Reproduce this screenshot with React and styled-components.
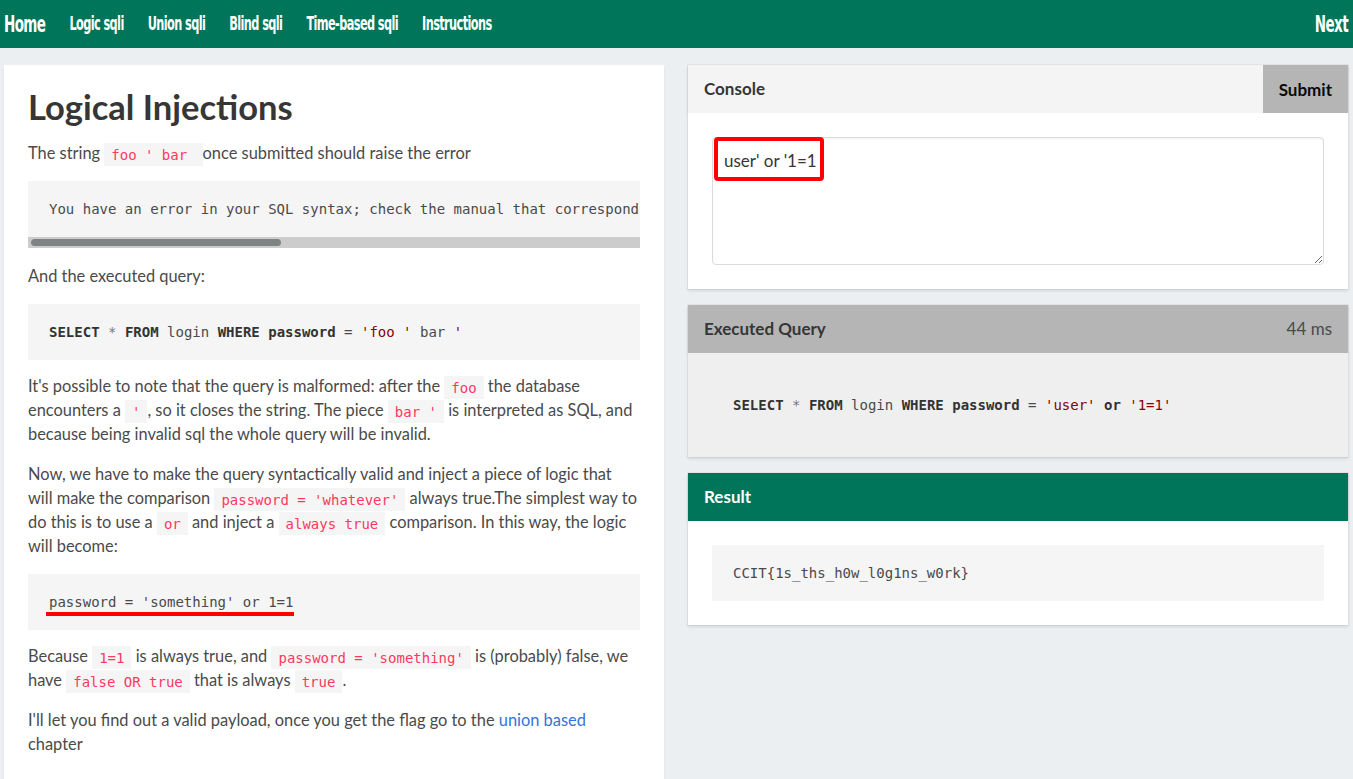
import React from 'react';
import styled, { createGlobalStyle } from 'styled-components';

// Base page styles, close to a Bulma default look
const GlobalStyle = createGlobalStyle`
  html, body {
    margin: 0;
    padding: 0;
    background: #eceff1;
    font-family: Lato, "Open Sans", sans-serif;
    font-size: 16.4px;
    line-height: 24px;
    color: #4a4a4a;
  }
  * { box-sizing: border-box; }
`;

const Navbar = styled.nav`
  display: flex;
  align-items: center;
  height: 48px;
  background: #00755a;
  padding: 0 5px 0 4px;
`;

const NavLink = styled.a`
  display: inline-block;
  color: #fff;
  font-family: "DejaVu Sans Condensed", "DejaVu Sans", sans-serif;
  font-stretch: condensed;
  font-weight: 700;
  font-size: ${({ $brand }) => ($brand ? '15px' : '12.6px')};
  letter-spacing: -0.6px;
  transform: scaleY(1.55);
  margin-right: ${({ $last }) => ($last ? '0' : '24px')};
  text-decoration: none;
  cursor: pointer;
`;

const NavSpacer = styled.div`
  flex: 1;
`;

const Main = styled.main`
  display: grid;
  grid-template-columns: minmax(0, 1fr) minmax(0, 1fr);
  align-items: start;
  gap: 24px;
  padding: 17px 5px 0 4px;
`;

const ArticleCard = styled.article`
  background: #fff;
  padding: 24px 24px 40px;
  box-shadow: 0 2px 3px rgba(10, 10, 10, 0.06);
`;

const Title = styled.h1`
  margin: 0 0 16px;
  font-size: 34.5px;
  line-height: 36px;
  font-weight: 700;
  color: #363636;
`;

const Para = styled.p`
  margin: 0 0 16px;
`;

const Code = styled.code`
  font-family: "DejaVu Sans Mono", monospace;
  font-size: 14px;
  line-height: 1;
  color: #ff3860;
  background: #f5f5f5;
  padding: 3.5px 7px;
`;

const Pre = styled.pre`
  margin: ${({ $flush }) => ($flush ? '0' : '0 0 14px')};
  padding: ${({ $pad }) => $pad || '17.5px 21px'};
  background: ${({ $bg }) => $bg || '#f5f5f5'};
  color: #4a4a4a;
  font-family: "DejaVu Sans Mono", monospace;
  font-size: 14px;
  line-height: 21px;
  white-space: pre;
  overflow: hidden;
`;

// Pre block that overflows sideways, with its horizontal scrollbar drawn in
const ScrollBox = styled.div`
  margin: 0 0 16px;
  background: #f5f5f5;
`;

const ScrollTrack = styled.div`
  height: 11px;
  background: #cccccc;
  padding: 2px 3px;
`;

const ScrollThumb = styled.div`
  width: 250px;
  height: 7px;
  border-radius: 4px;
  background: #7f8383;
`;

const Kw = styled.span`
  font-weight: 700;
  color: #333;
`;

const Str = styled.span`
  color: #880000;
`;

const Op = styled.span`
  color: #777;
`;

// Red hand-drawn underline from the annotated screenshot
const Marked = styled.span`
  position: relative;
  &::after {
    content: '';
    position: absolute;
    left: -3px;
    right: -1px;
    bottom: -6px;
    height: 4px;
    background: #ff0000;
  }
`;

const Link = styled.a`
  color: #3273dc;
  text-decoration: none;
`;

const Column = styled.section`
  display: flex;
  flex-direction: column;
  gap: 16px;
`;

const Card = styled.div`
  background: #fff;
  box-shadow: 0 2px 3px rgba(10, 10, 10, 0.1), 0 0 0 1px rgba(10, 10, 10, 0.04);
`;

const CardHeader = styled.header`
  display: flex;
  align-items: stretch;
  height: 48px;
  background: ${({ $bg }) => $bg};
  color: ${({ $color }) => $color || '#363636'};
  box-shadow: 0 1px 2px rgba(10, 10, 10, 0.1);
`;

const HeaderTitle = styled.p`
  flex: 1;
  margin: 0;
  display: flex;
  align-items: center;
  padding: 0 16px;
  font-size: 17px;
  font-weight: 700;
`;

const HeaderMeta = styled.span`
  display: flex;
  align-items: center;
  padding: 0 16px;
  font-size: 17px;
  color: #4a4a4a;
`;

const SubmitButton = styled.button`
  border: none;
  margin: 0;
  padding: 0 16px;
  background: #b5b5b5;
  color: #0a0a0a;
  font-family: inherit;
  font-size: 17px;
  font-weight: 700;
  cursor: pointer;
`;

const CardBody = styled.div`
  padding: ${({ $flush }) => ($flush ? '0' : '24px')};
  background: ${({ $bg }) => $bg || '#fff'};
`;

const InputWrap = styled.div`
  position: relative;
`;

const Textarea = styled.textarea`
  display: block;
  width: 100%;
  height: 128px;
  padding: 11px;
  border: 1px solid #dbdbdb;
  border-radius: 4px;
  font-family: Lato, "Open Sans", sans-serif;
  font-size: 17px;
  line-height: 24px;
  color: #363636;
  resize: vertical;
  outline: none;
  box-shadow: inset 0 1px 2px rgba(10, 10, 10, 0.05);
`;

const RedBox = styled.div`
  position: absolute;
  left: 2px;
  top: 0;
  width: 110px;
  height: 44px;
  border: 4px solid #ff0000;
  border-radius: 4px;
  pointer-events: none;
`;

const errorText =
  "You have an error in your SQL syntax; check the manual that corresponds to your MySQL server version for the right syntax to use near 'bar '' at line 1";

export default function App() {
  return (
    <>
      <GlobalStyle />
      <Navbar>
        <NavLink $brand>Home</NavLink>
        <NavLink>Logic sqli</NavLink>
        <NavLink>Union sqli</NavLink>
        <NavLink>Blind sqli</NavLink>
        <NavLink>Time-based sqli</NavLink>
        <NavLink>Instructions</NavLink>
        <NavSpacer />
        <NavLink $brand $last>Next</NavLink>
      </Navbar>

      <Main>
        <ArticleCard>
          <Title>Logical Injections</Title>
          <Para>
            The string <Code>foo ' bar </Code> once submitted should raise the error
          </Para>
          <ScrollBox>
            <Pre $flush>{errorText}</Pre>
            <ScrollTrack>
              <ScrollThumb />
            </ScrollTrack>
          </ScrollBox>
          <Para>And the executed query:</Para>
          <Pre>
            <Kw>SELECT</Kw> <Op>*</Op> <Kw>FROM</Kw> login <Kw>WHERE</Kw> <Kw>password</Kw> = <Str>'foo '</Str> bar <Str>'</Str>
          </Pre>
          <Para>
            It's possible to note that the query is malformed: after the <Code>foo</Code> the database
            encounters a <Code>'</Code>, so it closes the string. The piece <Code>bar '</Code> is
            interpreted as SQL, and because being invalid sql the whole query will be invalid.
          </Para>
          <Para>
            Now, we have to make the query syntactically valid and inject a piece of logic that will
            make the comparison <Code>password = 'whatever'</Code> always true.The simplest way to do
            this is to use a <Code>or</Code> and inject a <Code>always true</Code> comparison. In this
            way, the logic will become:
          </Para>
          <Pre>
            <Marked>password = 'something' or 1=1</Marked>
          </Pre>
          <Para>
            Because <Code>1=1</Code> is always true, and <Code>password = 'something'</Code> is
            (probably) false, we have <Code>false OR true</Code> that is always <Code>true</Code>.
          </Para>
          <Para>
            I'll let you find out a valid payload, once you get the flag go to the{' '}
            <Link>union based</Link> chapter
          </Para>
        </ArticleCard>

        <Column>
          <Card>
            <CardHeader $bg="#f4f4f4">
              <HeaderTitle>Console</HeaderTitle>
              <SubmitButton>Submit</SubmitButton>
            </CardHeader>
            <CardBody>
              <InputWrap>
                <Textarea defaultValue="user' or '1=1" spellCheck={false} />
                <RedBox />
              </InputWrap>
            </CardBody>
          </Card>

          <Card>
            <CardHeader $bg="#b5b5b5">
              <HeaderTitle>Executed Query</HeaderTitle>
              <HeaderMeta>44 ms</HeaderMeta>
            </CardHeader>
            <CardBody $flush $bg="#efefef">
              <Pre $flush $bg="transparent" $pad="41.5px 45px">
                <Kw>SELECT</Kw> <Op>*</Op> <Kw>FROM</Kw> login <Kw>WHERE</Kw> <Kw>password</Kw> ={' '}
                <Str>'user'</Str> <Kw>or</Kw> <Str>'1=1'</Str>
              </Pre>
            </CardBody>
          </Card>

          <Card>
            <CardHeader $bg="#00755a" $color="#fff">
              <HeaderTitle>Result</HeaderTitle>
            </CardHeader>
            <CardBody>
              <Pre $flush>CCIT{'{'}1s_ths_h0w_l0g1ns_w0rk{'}'}</Pre>
            </CardBody>
          </Card>
        </Column>
      </Main>
    </>
  );
}
